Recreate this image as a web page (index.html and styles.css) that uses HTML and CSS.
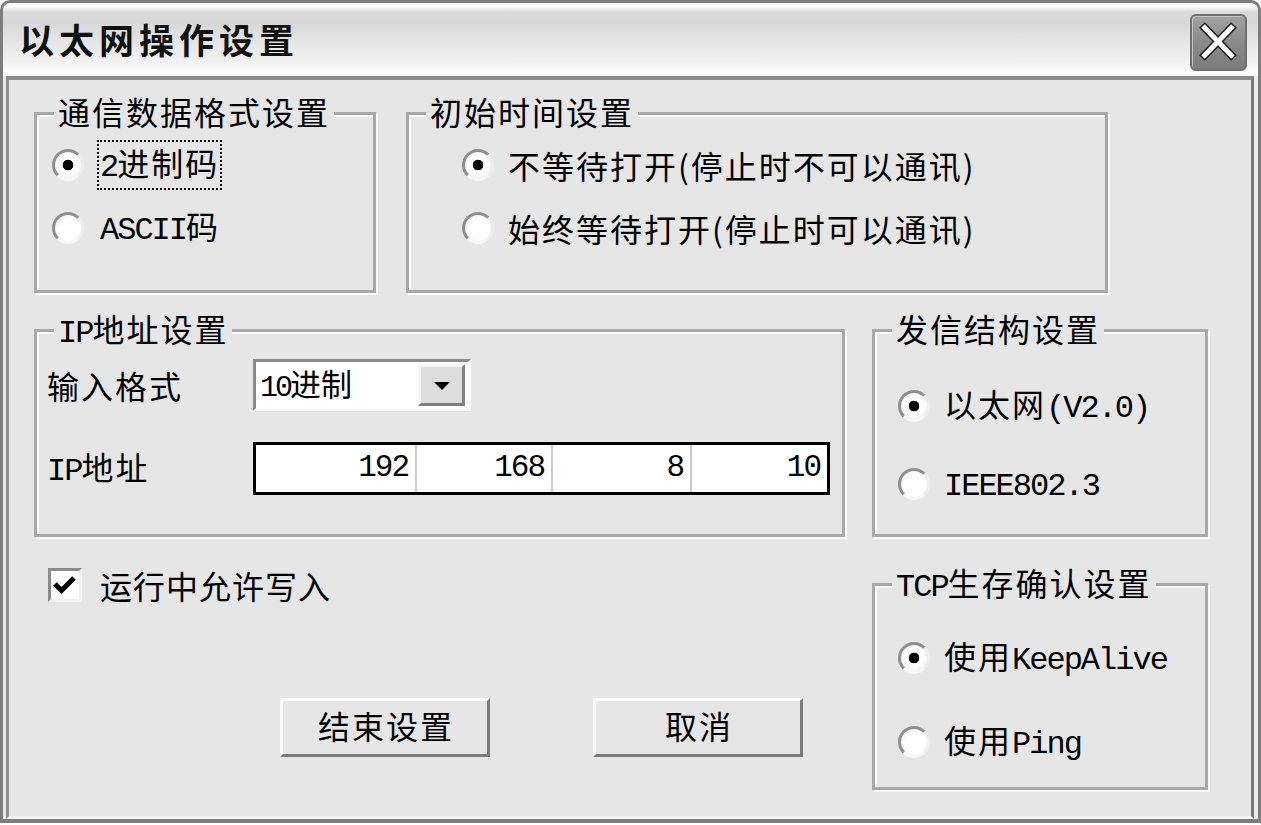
FILE: index.html
```html
<!DOCTYPE html>
<html lang="zh-CN">
<head>
<meta charset="utf-8">
<title>以太网操作设置</title>
<link rel="stylesheet" href="styles.css">
</head>
<body>
<div class="window">
  <div class="titlebar">
    <h1 class="title">以太网操作设置</h1>
    <button class="close-btn" type="button" aria-label="关闭">
      <svg width="51" height="51" viewBox="0 0 51 51">
        <path d="M9 8 L41 41 M41 8 L9 41" stroke="#1a1a1a" stroke-width="8" stroke-linecap="butt"/>
        <path d="M10 9 L40 40 M40 9 L10 40" stroke="#fff" stroke-width="5" stroke-linecap="butt"/>
      </svg>
    </button>
  </div>
  <div class="client">
    <div class="row row-1">
      <section class="group group-a">
        <h2 class="group-title">通信数据格式设置</h2>
        <div class="options options-a">
          <div class="option"><span class="radio checked"></span><span class="option-text focus"><span class="lat">2</span>进制码</span></div>
          <div class="option"><span class="radio"></span><span class="option-text"><span class="lat">ASCII</span>码</span></div>
        </div>
      </section>
      <section class="group group-b">
        <h2 class="group-title">初始时间设置</h2>
        <div class="options options-b">
          <div class="option"><span class="radio checked"></span><span class="option-text">不等待打开(停止时不可以通讯)</span></div>
          <div class="option"><span class="radio"></span><span class="option-text">始终等待打开(停止时可以通讯)</span></div>
        </div>
      </section>
    </div>

    <div class="row row-2">
      <section class="group group-c">
        <h2 class="group-title"><span class="lat">IP</span>地址设置</h2>
        <div class="field-row field-format">
          <span class="field-label">输入格式</span>
          <div class="combo">
            <span class="combo-text"><span class="lat">10</span>进制</span>
            <span class="combo-btn"><span class="tri"></span></span>
          </div>
        </div>
        <div class="field-row field-ip">
          <span class="field-label"><span class="lat">IP</span>地址</span>
          <div class="ipbox">
            <span class="ipcell">192</span>
            <span class="ipcell">168</span>
            <span class="ipcell">8</span>
            <span class="ipcell">10</span>
          </div>
        </div>
      </section>
      <section class="group group-d">
        <h2 class="group-title">发信结构设置</h2>
        <div class="options options-d">
          <div class="option"><span class="radio checked"></span><span class="option-text">以太网<span class="lat">(V2.0)</span></span></div>
          <div class="option"><span class="radio"></span><span class="option-text"><span class="lat">IEEE802.3</span></span></div>
        </div>
      </section>
    </div>

    <div class="row row-3">
      <div class="left-col">
        <div class="check-row">
          <span class="checkbox">
            <svg width="24" height="24" viewBox="0 0 24 24"><path d="M2 11 L8.5 17.5 L21 5" fill="none" stroke="#000" stroke-width="5"/></svg>
          </span>
          <span class="check-text">运行中允许写入</span>
        </div>
        <div class="buttons">
          <button class="btn" type="button">结束设置</button>
          <button class="btn" type="button">取消</button>
        </div>
      </div>
      <section class="group group-e">
        <h2 class="group-title"><span class="lat">TCP</span>生存确认设置</h2>
        <div class="options options-e">
          <div class="option"><span class="radio checked"></span><span class="option-text">使用<span class="lat">KeepAlive</span></span></div>
          <div class="option"><span class="radio"></span><span class="option-text">使用<span class="lat">Ping</span></span></div>
        </div>
      </section>
    </div>
  </div>
</div>
</body>
</html>
```

FILE: styles.css
```css
* {
  box-sizing: border-box;
  margin: 0;
  padding: 0;
}

html, body {
  background: #ffffff;
}

body {
  font-family: "Noto Sans CJK SC", "Noto Sans", sans-serif;
  color: #000;
  width: 1261px;
  height: 825px;
  overflow: hidden;
}

.lat {
  font-family: "Liberation Mono", "DejaVu Sans Mono", monospace;
  font-size: 32px;
  letter-spacing: -2px;
}

/* window frame */
.window {
  width: 1261px;
  height: 823px;
  border: 3px solid #7d7d7d;
  border-bottom-width: 4px;
  border-radius: 10px 10px 0 0;
  background: #ebebeb;
  display: flex;
  flex-direction: column;
}

.titlebar {
  height: 73px;
  flex: none;
  display: flex;
  align-items: flex-end;
  justify-content: space-between;
  padding: 0 11px 5px 16px;
  border-radius: 8px 8px 0 0;
  background: linear-gradient(to bottom,
    #f2f2f2 0px, #ffffff 3px, #dadada 9px, #d8d8d8 20px,
    #e6e6e6 40px, #f3f3f3 60px, #fbfbfb 68px, #ffffff 73px);
}

.title {
  align-self: center;
  margin-top: 4px;
  font-size: 35px;
  line-height: 44px;
  font-weight: 700;
  letter-spacing: 5px;
  color: #111;
}

.close-btn {
  width: 57px;
  height: 57px;
  border: 2px solid #6e6e6e;
  border-radius: 6px;
  background: linear-gradient(to bottom, #a2a2a2, #8a8a8a 50%, #7c7c7c);
  box-shadow: inset 1px 1px 0 #c4c4c4;
  display: flex;
  align-items: center;
  justify-content: center;
}

.client {
  flex: 1;
  margin: 0 4px 0 3px;
  border-style: solid;
  border-width: 4px 3px 3px 3px;
  border-color: #8c8c8c #777777 #f4f4f4 #8f8f8f;
  background: #e6e6e6;
  padding: 32px 0 0 25px;
}

.row {
  display: flex;
  align-items: flex-start;
}

.row-1 {
  gap: 30px;
  height: 181px;
}

.row-2 {
  gap: 27px;
  height: 208px;
  margin-top: 36px;
}

.row-3 {
  gap: 27px;
  margin-top: 18px;
}

/* group boxes */
.group {
  border: 3px solid #a8a8a8;
  box-shadow: inset 2px 2px 0 #fbfbfb, 2px 2px 0 #fbfbfb;
  padding-left: 10px;
  height: 100%;
}

.group-a { width: 342px; }
.group-b { width: 702px; }
.group-c { width: 811px; }
.group-d { width: 336px; }
.group-e { width: 336px; height: 207px; margin-top: 28px; }

.group-title {
  display: block;
  width: fit-content;
  margin: -22px 0 2px 7px;
  padding: 0 4px;
  background: #e6e6e6;
  font-size: 32px;
  line-height: 36px;
  font-weight: 400;
  letter-spacing: 2px;
  white-space: nowrap;
}

/* options */
.options {
  display: flex;
  flex-direction: column;
}

.option {
  height: 43px;
  display: flex;
  align-items: center;
  gap: 14px;
}

.option-text {
  font-size: 32px;
  line-height: 40px;
  letter-spacing: 2px;
  white-space: nowrap;
}

.options-a { padding-left: 5px; margin-top: 14px; gap: 20px; }
.options-a .option { gap: 16px; }
.options-b { padding-left: 43px; margin-top: 14px; gap: 20px; }
.options-d { padding-left: 13px; margin-top: 38px; gap: 35px; }
.options-e { padding-left: 13px; margin-top: 30px; gap: 41px; }

.focus {
  outline: 2px dotted #000;
  outline-offset: 1px;
  line-height: 38px;
}

.radio {
  flex: none;
  width: 32px;
  height: 32px;
  border-radius: 50%;
  border: 3px solid;
  border-color: #8e8e8e #ededed #f6f6f6 #8e8e8e;
  background: radial-gradient(circle at 55% 55%, #ffffff 0 50%, #efefef 80%);
}

.radio.checked {
  background: radial-gradient(circle, #000 0 5px, #fafafa 5.6px, #ffffff 50%, #efefef 80%);
}

/* IP group fields */
.field-row {
  display: flex;
  align-items: center;
}

.field-label {
  width: 206px;
  flex: none;
  font-size: 32px;
  line-height: 40px;
  letter-spacing: 2px;
  white-space: nowrap;
}

.field-format {
  margin-top: 7px;
  height: 52px;
}

.field-ip {
  margin-top: 31px;
  height: 53px;
}

.combo {
  width: 218px;
  height: 52px;
  border: 3px solid;
  border-color: #8a8a8a #fbfbfb #fbfbfb #8a8a8a;
  background: #fff;
  display: flex;
  align-items: center;
  justify-content: space-between;
  padding: 0 3px 0 4px;
}

.combo-text {
  font-size: 31px;
  line-height: 40px;
  white-space: nowrap;
}

.combo-text .lat {
  font-size: 30px;
  letter-spacing: -3px;
}

.combo-btn {
  width: 47px;
  height: 42px;
  border: 3px solid;
  border-color: #f6f6f6 #808080 #808080 #f6f6f6;
  background: #dcdcdc;
  display: flex;
  align-items: center;
  justify-content: center;
}

.tri {
  width: 0;
  height: 0;
  border-left: 8px solid transparent;
  border-right: 8px solid transparent;
  border-top: 8px solid #000;
  margin-top: 2px;
}

.ipbox {
  width: 577px;
  height: 53px;
  border: 3px solid #000;
  background: #fff;
  display: grid;
  grid-template-columns: 159px 136px 139px 1fr;
}

.ipcell {
  text-align: right;
  padding-right: 7px;
  font-family: "Liberation Mono", "DejaVu Sans Mono", monospace;
  font-size: 31px;
  letter-spacing: -2px;
  line-height: 45px;
}

.ipcell + .ipcell {
  border-left: 2px solid #cbcbcb;
}

/* bottom-left column */
.left-col {
  width: 811px;
  flex: none;
  display: flex;
  flex-direction: column;
}

.check-row {
  margin-top: 10px;
  height: 40px;
  display: flex;
  align-items: center;
  padding-left: 14px;
  gap: 18px;
}

.checkbox {
  width: 34px;
  height: 34px;
  flex: none;
  border: 3px solid;
  border-color: #8a8a8a #f2f2f2 #f2f2f2 #8a8a8a;
  background: #fdfdfd;
  display: flex;
  align-items: center;
  justify-content: center;
}

.check-text {
  font-size: 32px;
  line-height: 40px;
  letter-spacing: 1px;
  white-space: nowrap;
}

.buttons {
  margin-top: 93px;
  padding-left: 246px;
  display: flex;
  gap: 103px;
}

.btn {
  width: 210px;
  height: 59px;
  border: 3px solid;
  border-color: #fbfbfb #7a7a7a #7a7a7a #fbfbfb;
  background: #e6e6e6;
  font-family: "Noto Sans CJK SC", sans-serif;
  font-size: 32px;
  line-height: 40px;
  letter-spacing: 2px;
  color: #000;
  padding: 0 0 6px 2px;
}
```
